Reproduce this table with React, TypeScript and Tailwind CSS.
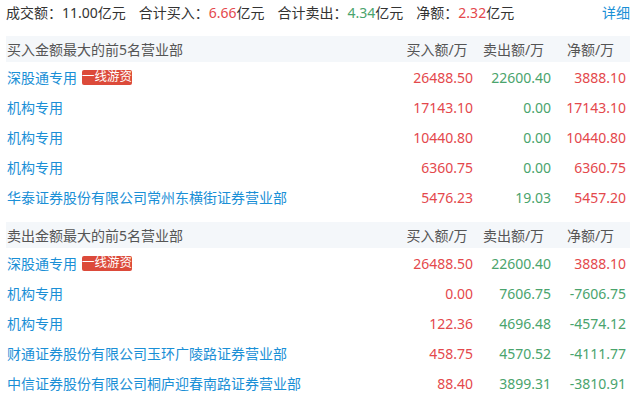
type Row = {
  name: string;
  tag?: string;
  buy: string;
  sell: string;
  net: string;
};

const buyRows: Row[] = [
  { name: "深股通专用", tag: "一线游资", buy: "26488.50", sell: "22600.40", net: "3888.10" },
  { name: "机构专用", buy: "17143.10", sell: "0.00", net: "17143.10" },
  { name: "机构专用", buy: "10440.80", sell: "0.00", net: "10440.80" },
  { name: "机构专用", buy: "6360.75", sell: "0.00", net: "6360.75" },
  { name: "华泰证券股份有限公司常州东横街证券营业部", buy: "5476.23", sell: "19.03", net: "5457.20" },
];

const sellRows: Row[] = [
  { name: "深股通专用", tag: "一线游资", buy: "26488.50", sell: "22600.40", net: "3888.10" },
  { name: "机构专用", buy: "0.00", sell: "7606.75", net: "-7606.75" },
  { name: "机构专用", buy: "122.36", sell: "4696.48", net: "-4574.12" },
  { name: "财通证券股份有限公司玉环广陵路证券营业部", buy: "458.75", sell: "4570.52", net: "-4111.77" },
  { name: "中信证券股份有限公司桐庐迎春南路证券营业部", buy: "88.40", sell: "3899.31", net: "-3810.91" },
];

const red = "text-[#e4484c]";
const green = "text-[#4aa46d]";

const numColor = (v: string) => (v.startsWith("-") ? green : red);

const Section = ({ title, rows }: { title: string; rows: Row[] }) => (
  <div className="flex flex-col">
    <div className="flex h-[26px] items-center bg-[#f4f7fa] pr-[4px] text-[#555]">
      <div className="flex-1 pl-[1px]">{title}</div>
      <div className="w-[72px] text-center">买入额/万</div>
      <div className="ml-[3px] w-[75px] text-center">卖出额/万</div>
      <div className="ml-[4px] w-[71px] text-center">净额/万</div>
    </div>
    {rows.map((r, i) => (
      <div key={i} className="flex h-[30px] items-center pr-[4px]">
        <div className="flex flex-1 items-center pl-[1px] text-[#1a8fd6]">
          <span>{r.name}</span>
          {r.tag && (
            <span className="ml-[5px] flex h-[15px] w-[50px] items-center justify-center rounded-[2px] bg-[#dc4a3a] text-[12.5px] leading-none text-white">
              {r.tag}
            </span>
          )}
        </div>
        <div className={`w-[72px] text-right ${red}`}>{r.buy}</div>
        <div className={`ml-[3px] w-[75px] text-right ${green}`}>{r.sell}</div>
        <div className={`ml-[4px] w-[71px] text-right ${numColor(r.net)}`}>{r.net}</div>
      </div>
    ))}
  </div>
);

export default function App() {
  return (
    <div
      className="h-[399px] w-[636px] overflow-hidden bg-white px-[6px] text-[14px] text-[#333]"
      style={{ fontFamily: '"Noto Sans", "Noto Sans CJK SC", sans-serif' }}
    >
      <div className="mb-[12px] flex h-[24px] items-center">
        <div className="flex flex-1 items-center gap-[13px]">
          <span>
            成交额：<span>11.00</span>亿元
          </span>
          <span>
            合计买入：<span className={red}>6.66</span>亿元
          </span>
          <span>
            合计卖出：<span className={green}>4.34</span>亿元
          </span>
          <span>
            净额：<span className={red}>2.32</span>亿元
          </span>
        </div>
        <span className="text-[#1a8fd6]">详细</span>
      </div>
      <Section title="买入金额最大的前5名营业部" rows={buyRows} />
      <div className="h-[10px]" />
      <Section title="卖出金额最大的前5名营业部" rows={sellRows} />
    </div>
  );
}
